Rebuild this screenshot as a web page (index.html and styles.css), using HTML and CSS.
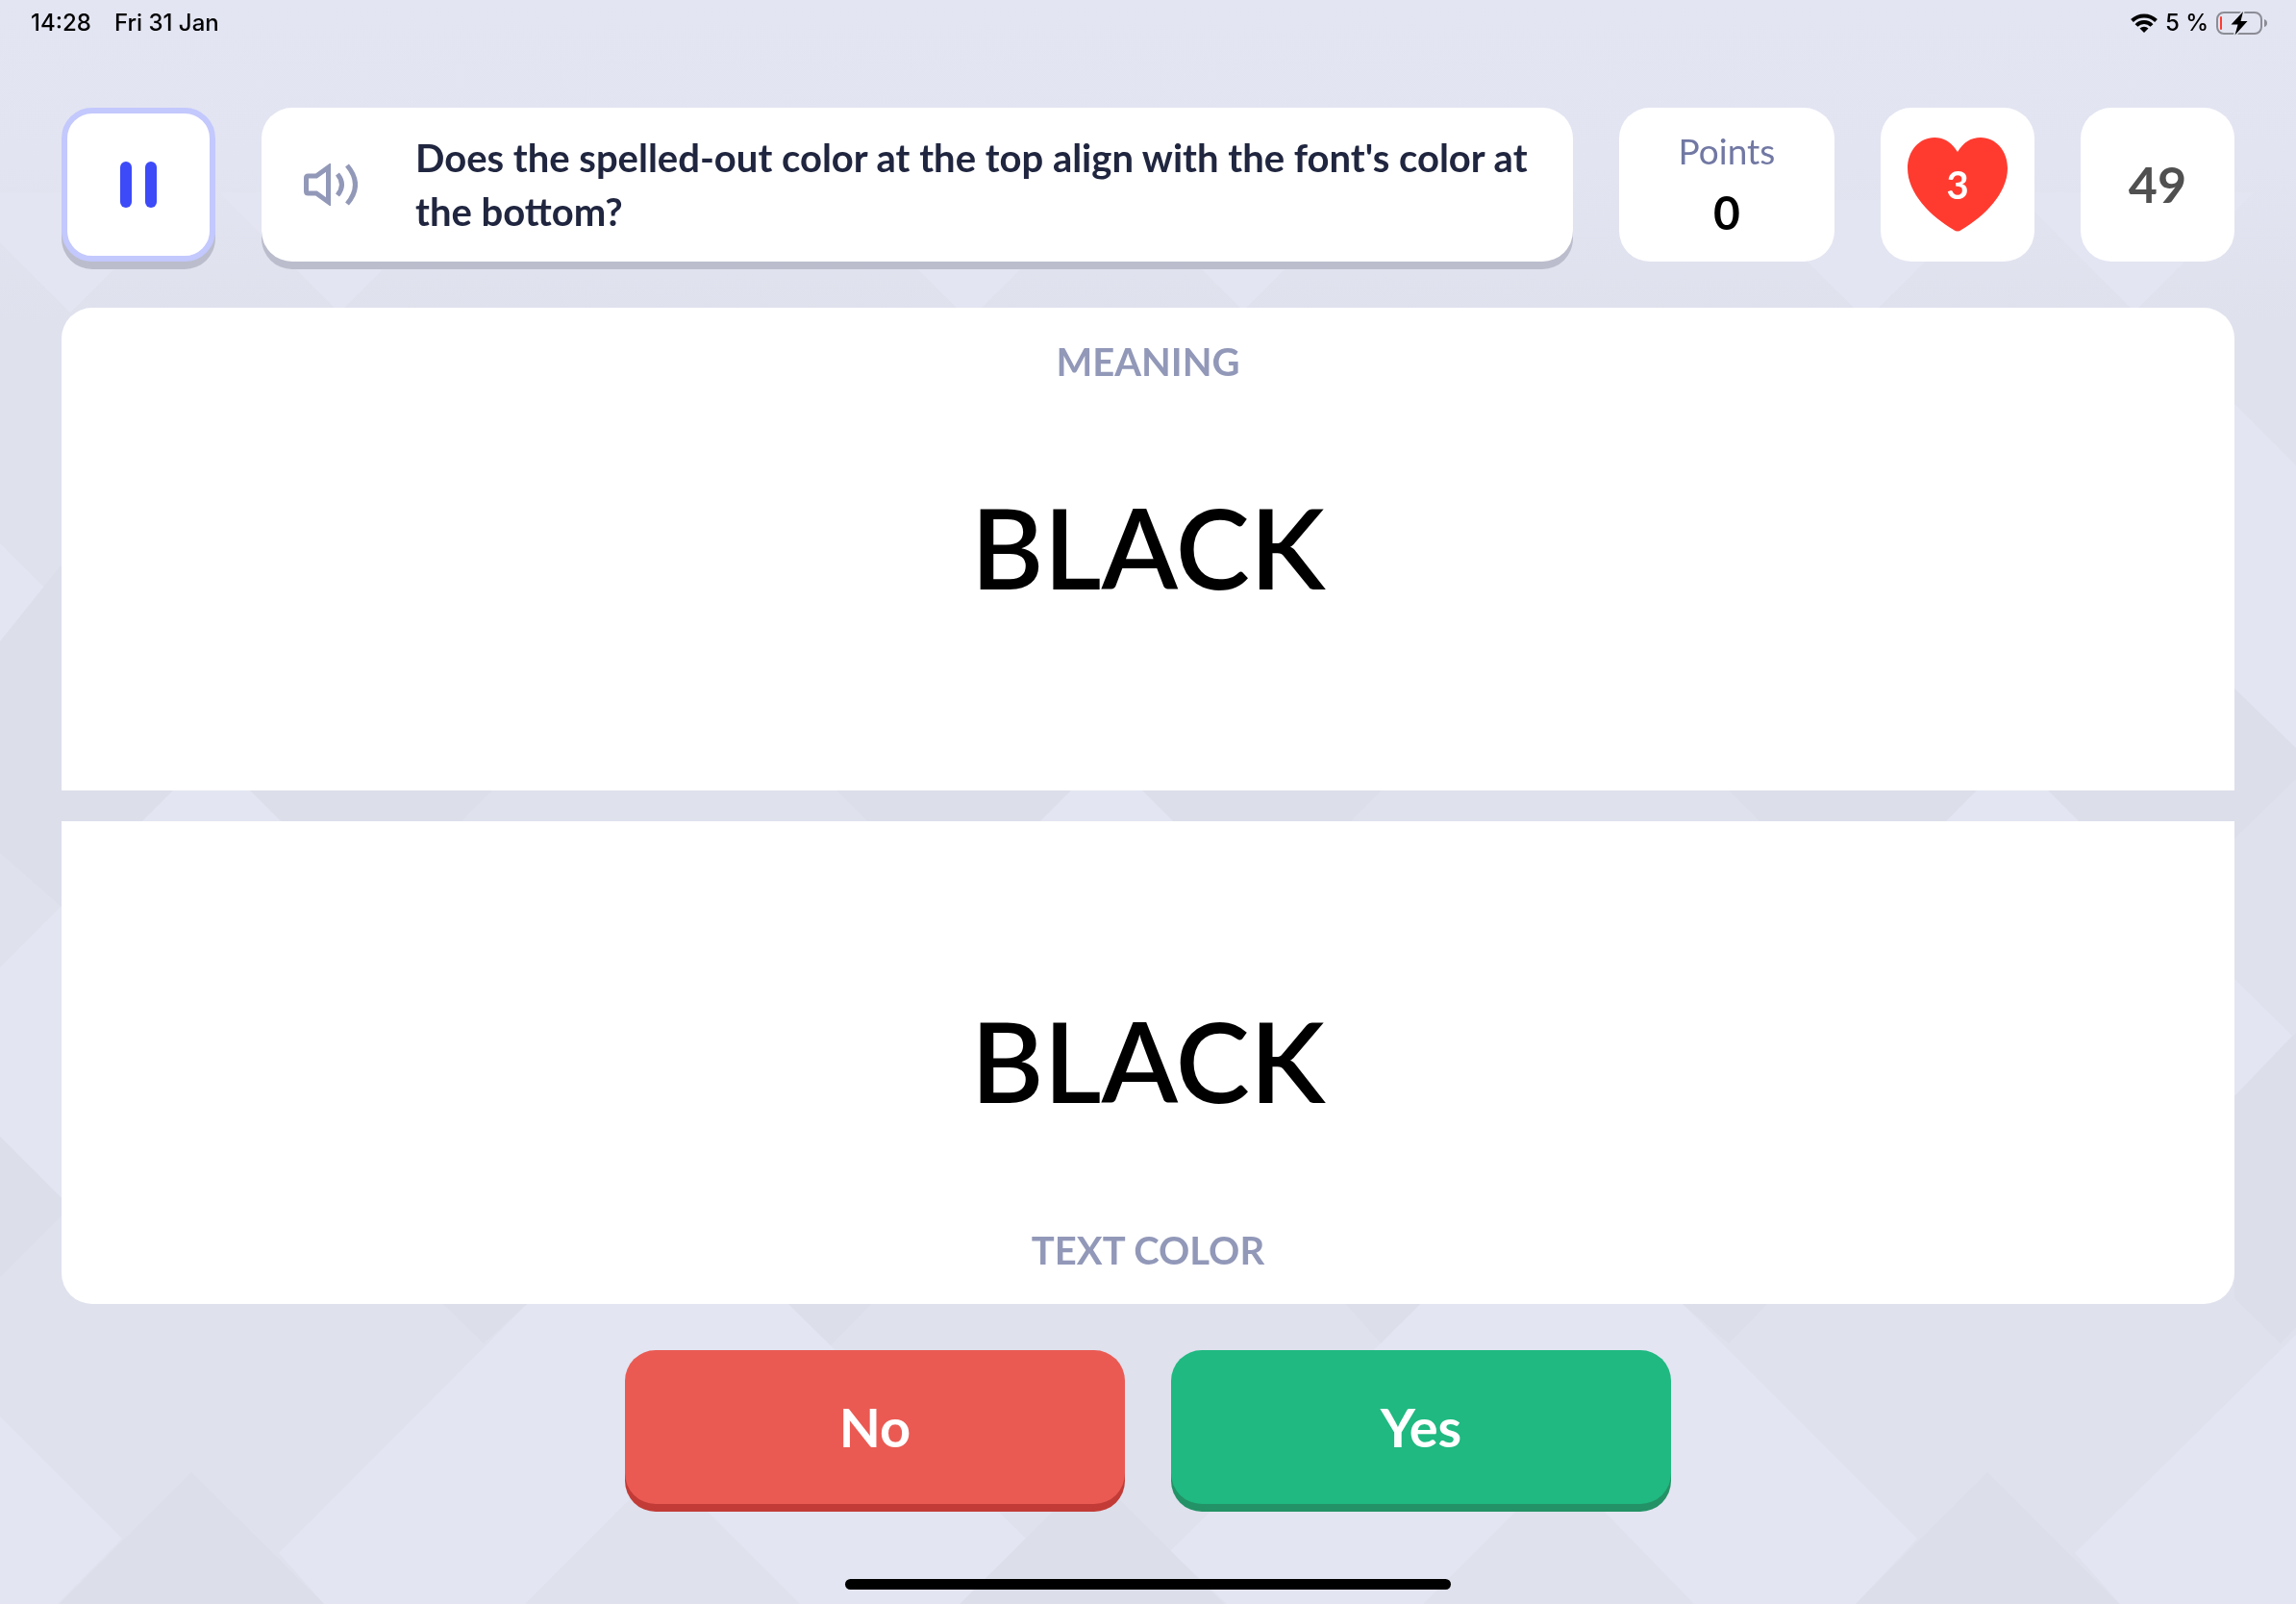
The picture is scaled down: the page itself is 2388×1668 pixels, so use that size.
FILE: index.html
```
<!DOCTYPE html>
<html lang="en">
<head>
<meta charset="utf-8">
<meta name="viewport" content="width=device-width, initial-scale=1">
<title>Color match</title>
<link rel="stylesheet" href="styles.css">
</head>
<body>
<svg class="backdrop" viewBox="0 0 2388 1668" preserveAspectRatio="xMidYMid slice" aria-hidden="true">
  <defs>
    <linearGradient id="sky" x1="0" y1="0" x2="0" y2="1">
      <stop offset="0" stop-color="#e3e5f2"/>
      <stop offset="0.500" stop-color="#e2e4f1"/>
      <stop offset="1" stop-color="#dfe1ed"/>
    </linearGradient>
  </defs>
  <rect width="2388" height="1668" fill="#dfe1ed"/>
  <rect width="2388" height="340" fill="url(#sky)"/>
  <path fill="#e3e5f2" d="M0 252L73 325L198 200H0ZM228 200L353 325L478 200ZM883 208L1008 333L1133 208ZM1170 200L1293 323L1416 200ZM1816 208L1941 333L2066 208ZM2096 200L2220 324L2344 200Z"/>
  <path fill="#e3e5f2" d="M0 565L48 613L0 667ZM2324 420L2388 484V778L2324 716ZM2324 1018L2384 1077L2324 1140Z"/>
  <path fill="#dcdeea" d="M0 667L64 587V943L0 887ZM2324 716L2388 778V810L2324 872ZM2324 1140L2388 1074V1380L2372 1397L2324 1350Z"/>
  <path fill="#e3e5f2" d="M0 1006L64 942V1246L0 1182Z"/>
  <path fill="#dcdeea" d="M0 1182L64 1246V1264L0 1328ZM64 822H2324V854H64Z"/>
  <path fill="#dfe1ed" d="M512 822H870L902 854H480ZM1437 822H1798L1830 854H1405Z"/>
  <path fill="#e3e5f2" d="M180 822H260L292 854H148ZM1114 822H1188L1220 854H1082ZM2056 822H2130L2162 854H2024Z"/>
  <path fill="#e3e5f2" d="M0 1473L127 1600L60 1668H0ZM548 1356H820L1067 1600L1000 1668H832L689 1525L546 1668H337L290 1615ZM1477 1356H1750L1994 1600L1930 1668H1762L1623 1525L1480 1668H1276L1217 1613ZM2388 1388V1668H2205L2158 1615Z"/>
  <path fill="#dcdeea" d="M199 1531L337 1668H62ZM1136 1531L1273 1668H998ZM2067 1531L2204 1668H1930ZM461 1356H548L503 1397ZM820 1356H906L864 1399ZM1400 1356H1477L1436 1397ZM1750 1356H1838L1798 1397Z"/>
</svg>

<div class="screen">
  <div class="status">
    <div class="status-group status-clock"><span>14:28</span><span>Fri 31 Jan</span></div>
    <div class="status-group">
      <svg class="wifi" viewBox="0 0 28 20" aria-hidden="true">
        <g fill="none" stroke="#000" stroke-width="4">
          <path d="M1.500 7.500A18 18 0 0 1 26.500 7.500"/>
          <path d="M6 12.500A11 11 0 0 1 22 12.500"/>
        </g>
        <path d="M14 20L9.500 15.500A6.500 6.500 0 0 1 18.500 15.500Z"/>
      </svg>
      <span>5 %</span>
      <svg class="battery" viewBox="0 0 54 24" aria-hidden="true">
        <rect x="1" y="1" width="46" height="22" rx="7" fill="none" stroke="#8b8c95" stroke-width="2"/>
        <path d="M50 8Q53 9 53 12T50 16Z" fill="#8b8c95"/>
        <rect x="4" y="5" width="2" height="14" rx="1" fill="#ff3b30"/>
        <path d="M28 0L15.500 13.500H22.500L19.500 24.500L32.500 10H25.500Z" stroke="#e3e5f2" stroke-width="3" paint-order="stroke"/>
      </svg>
    </div>
  </div>

  <header class="toolbar">
    <button class="pause" type="button" aria-label="Pause">
      <svg viewBox="0 0 38 48" aria-hidden="true"><rect width="12" height="48" rx="6"/><rect x="26" width="12" height="48" rx="6"/></svg>
    </button>
    <button class="question" type="button">
      <svg class="speaker" viewBox="0 0 56 44" fill="none" stroke="#9298b8" stroke-width="5" aria-hidden="true">
        <path d="M2.500 15Q2.500 13 4.500 13H13L25.500 4V40L13 31H4.500Q2.500 31 2.500 29Z"/>
        <path d="M35 11Q44 22 35 33"/>
        <path d="M45 2Q62 22 45 42"/>
      </svg>
      <span>Does the spelled-out color at the top align with the font's color at the bottom?</span>
    </button>
    <div class="card points"><span class="points-label">Points</span><span class="points-value">0</span></div>
    <div class="card lives">
      <svg viewBox="0 0 104 98" aria-hidden="true"><path fill="#ff3b30" d="M52 15C46 5 38 0 28 0C12 0 0 14 0 32C0 58 24 82 48 96Q52 99 56 96C80 82 104 58 104 32C104 14 92 0 76 0C66 0 58 5 52 15Z"/></svg>
      <span>3</span>
    </div>
    <div class="card timer">49</div>
  </header>

  <main class="panels">
    <section class="panel panel-top">
      <h2>MEANING</h2>
      <p>BLACK</p>
    </section>
    <section class="panel panel-bottom">
      <p>BLACK</p>
      <h2>TEXT COLOR</h2>
    </section>
  </main>

  <div class="answers">
    <button class="answer no" type="button">No</button>
    <button class="answer yes" type="button">Yes</button>
  </div>
  <div class="home-bar"></div>
</div>
</body>
</html>
```
FILE: styles.css
```
* { box-sizing: border-box; }

body {
  margin: 0;
  background: #dfe1ed;
  color: #000;
  font-family: Lato, "Open Sans", sans-serif;
}

button {
  border: 0;
  padding: 0;
  font: inherit;
  color: inherit;
  cursor: pointer;
}

h2, p { margin: 0; }

.backdrop {
  position: fixed;
  inset: 0;
  z-index: -1;
  width: 100%;
  height: 100%;
}

.screen {
  display: flex;
  flex-direction: column;
  min-height: 100vh;
  padding: 0 64px 15px;
}

.status {
  display: flex;
  justify-content: space-between;
  height: 48px;
  margin: 0 -35px 64px -32px;
  font: 500 24px/48px Inter, sans-serif;
}

.status-group {
  display: flex;
  align-items: center;
  gap: 8px;
}

.status-clock { gap: 24px; }

.wifi { width: 28px; height: 20px; }
.battery { width: 54px; height: 24px; overflow: visible; }

.toolbar {
  display: flex;
  gap: 48px;
  height: 160px;
  margin-bottom: 48px;
}

.pause, .question, .card {
  background: #fff;
  border-radius: 32px;
}

.pause, .lives, .timer { flex: 0 0 160px; }

.pause {
  display: grid;
  place-items: center;
  border: 6px solid #c3c8fd;
  box-shadow: 0 8px #bbbdcc;
}

.pause svg {
  width: 38px;
  height: 48px;
  fill: #3c4af8;
}

.question {
  flex: 1;
  display: flex;
  align-items: center;
  gap: 60px;
  padding: 0 32px 0 44px;
  box-shadow: 0 8px #bbbdcc;
  color: #20263f;
  font-size: 40px;
  font-weight: 700;
  line-height: 56px;
  text-align: left;
}

.speaker {
  flex: none;
  width: 56px;
  height: 44px;
}

.card {
  display: grid;
  place-content: center;
  text-align: center;
}

.points {
  flex: 0 0 224px;
  padding-bottom: 6px;
}

.points-label {
  color: #7178a3;
  font-size: 37px;
  line-height: 64px;
}

.points-value {
  font-size: 48px;
  font-weight: 700;
  line-height: 64px;
}

.lives { place-items: center; }

.lives svg, .lives span { grid-area: 1 / 1; }

.lives svg { width: 104px; height: 98px; }

.lives span {
  color: #fff;
  font-size: 40px;
  font-weight: 700;
}

.timer {
  padding-bottom: 2px;
  color: #505050;
  font-size: 52px;
  font-weight: 700;
}

.panels {
  flex: 1;
  display: grid;
  grid-template-rows: 1fr 1fr;
  gap: 32px;
}

.panel {
  display: grid;
  background: #fff;
  text-align: center;
}

.panel-top {
  grid-template-rows: 112px 1fr 112px;
  border-radius: 32px 32px 0 0;
}

.panel-bottom {
  grid-template-rows: 1fr 112px;
  padding-top: 112px;
  border-radius: 0 0 32px 32px;
}

.panel h2 {
  color: #9298b8;
  font-size: 40px;
  font-weight: 700;
  line-height: 112px;
}

.panel p {
  align-self: center;
  padding-bottom: 4px;
  font-size: 116px;
  font-weight: 600;
  line-height: 160px;
}

.answers {
  display: flex;
  justify-content: center;
  gap: 48px;
  margin: 48px 0 78px;
}

.answer {
  width: 520px;
  height: 160px;
  padding-bottom: 2px;
  border-radius: 32px;
  color: #fff;
  font-size: 56px;
  font-weight: 700;
}

.no { background: #ea5a53; box-shadow: 0 8px #c23b36; }
.yes { background: #1fb981; box-shadow: 0 8px #239266; }

.home-bar {
  align-self: center;
  width: 630px;
  height: 11px;
  border-radius: 6px;
  background: #000;
}
```
